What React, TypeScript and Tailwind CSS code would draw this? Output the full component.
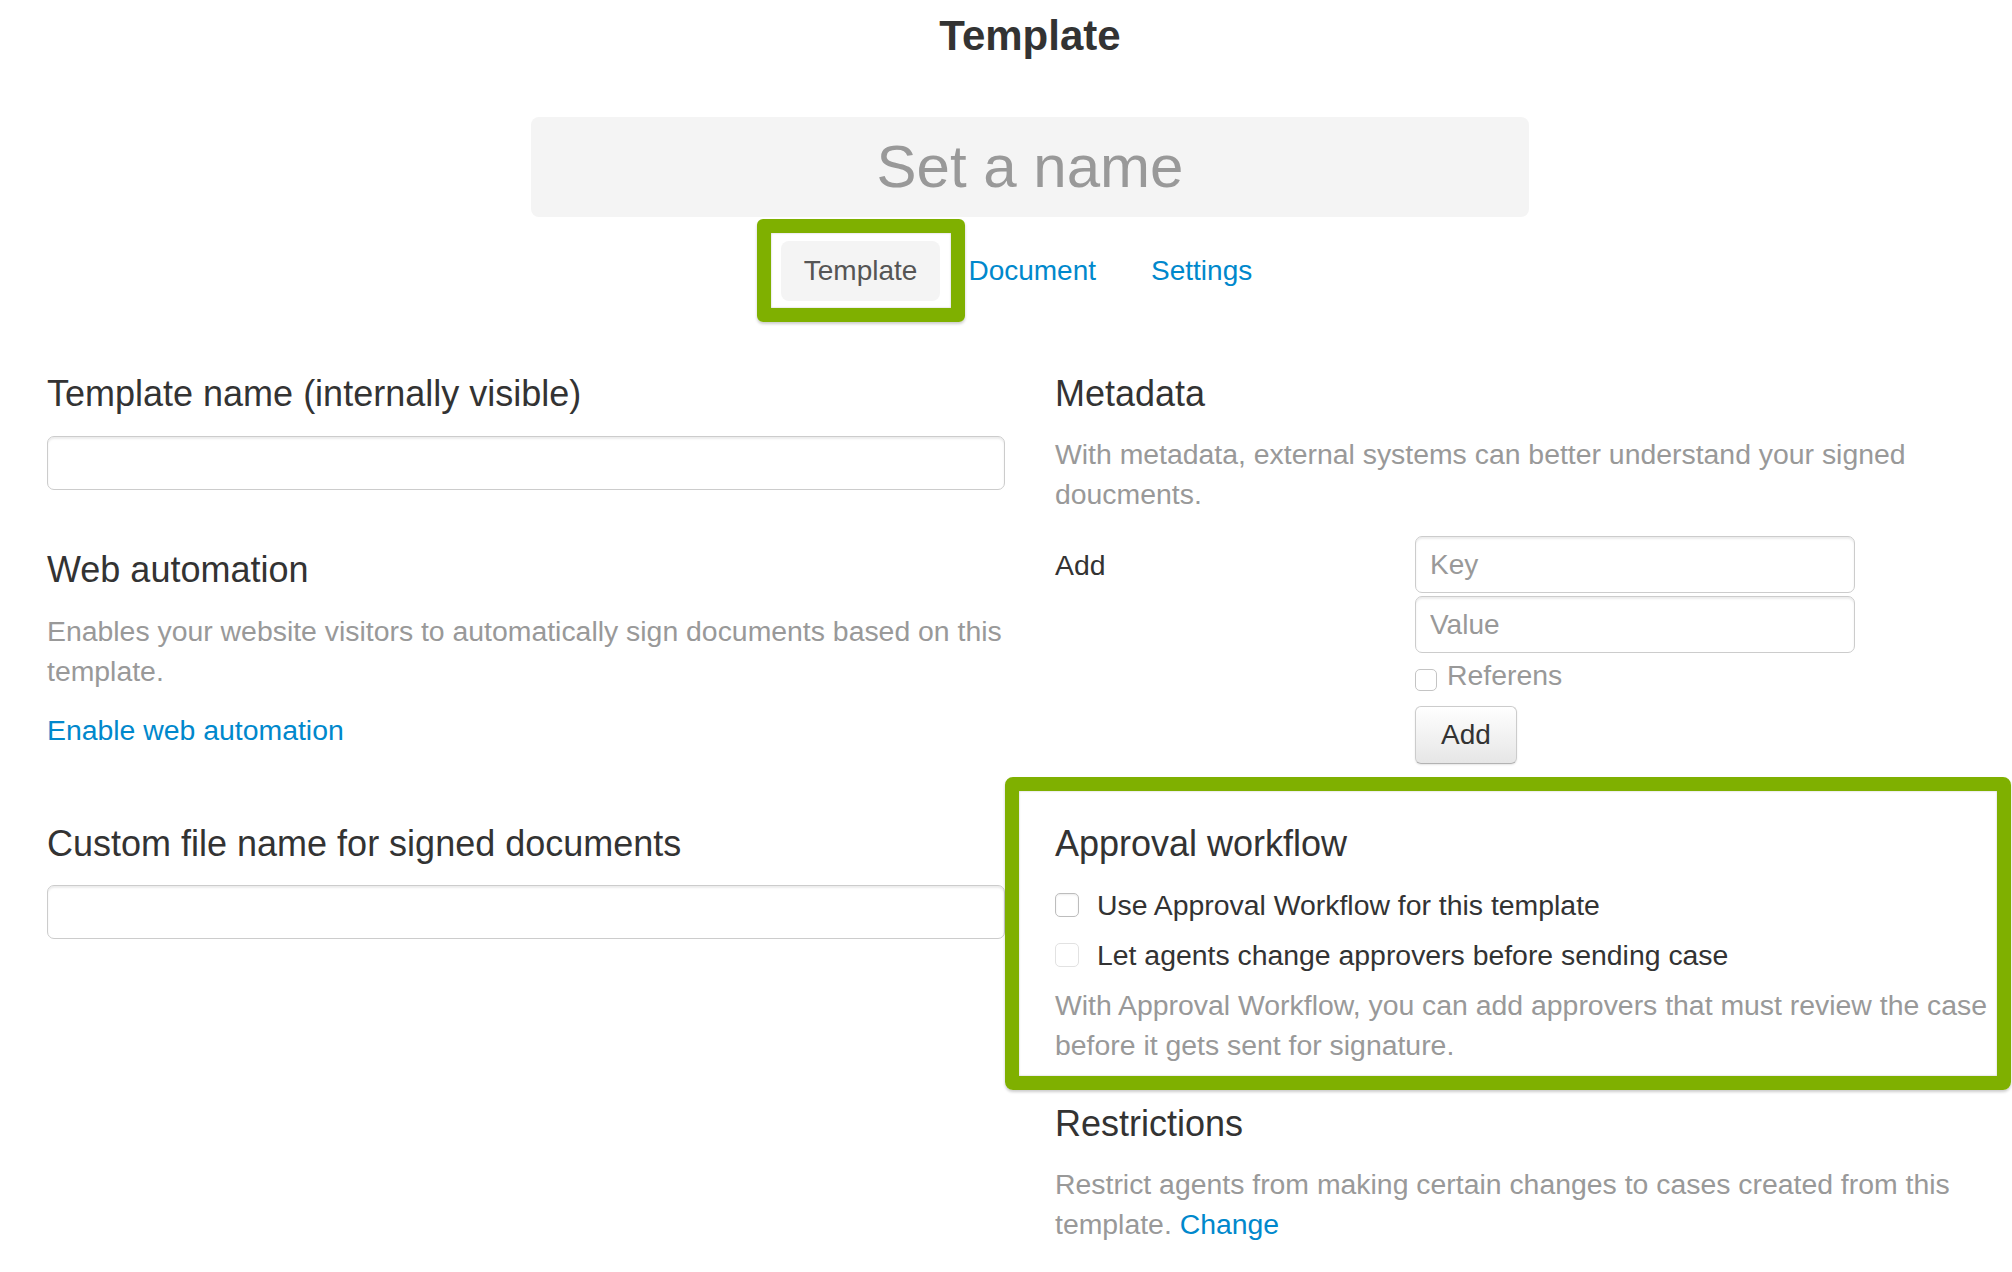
const inputCls =
  "w-full rounded-[7px] border border-[#cccccc] bg-white px-[14px] text-[28px] text-[#333] shadow-[inset_0_2px_2px_rgba(0,0,0,0.08)] outline-none placeholder:text-[#999]";

const Checkbox = ({ faded }: { faded?: boolean }) => (
  <span
    className={
      "block w-[24px] h-[24px] shrink-0 rounded-[5px] border bg-white " +
      (faded ? "border-[#e2e2e2]" : "border-[#bdbdbd] shadow-[inset_0_1px_2px_rgba(0,0,0,0.08)]")
    }
  />
);

const App = () => {
  return (
    <div className="w-[2012px] h-[1272px] overflow-hidden bg-white font-['Liberation_Sans',Arial,sans-serif] text-[28.4px] leading-[40px] text-[#333]">
      <div className="pl-[47px] w-[2013px]">
        {/* header */}
        <header className="w-[1966px] flex flex-col items-center">
          <h1 className="mt-[12px] text-[42px] leading-[48px] font-bold text-[#333]">Template</h1>
          <div className="mt-[57px] w-[998px] h-[100px] rounded-[8px] bg-[#f4f4f4] flex items-center justify-center text-[60px] leading-none text-[#999]">
            Set a name
          </div>
          <nav className="mt-[24px] mr-[4px] flex gap-[5px] h-[60px] text-[28px]">
            <div className="relative">
              <span className="flex h-[60px] items-center rounded-[8px] bg-[#f4f4f4] px-[23px] text-[#555]">Template</span>
              <span className="pointer-events-none absolute -left-[24px] -right-[25px] -top-[22px] -bottom-[21px] rounded-[6px] border-[14px] border-[#7fb000] shadow-[0_2px_3px_rgba(0,0,0,0.2),inset_0_0_2px_rgba(0,0,0,0.25)]" />
            </div>
            <a className="flex h-[60px] items-center px-[23px] text-[#0088cc]">Document</a>
            <a className="ml-[4px] flex h-[60px] items-center px-[23px] text-[#0088cc]">Settings</a>
          </nav>
        </header>

        <div className="mt-[73px] grid grid-cols-[958px_958px] gap-x-[50px]">
          {/* left column */}
          <div className="flex flex-col items-start">
            <h2 className="text-[36px] leading-[40px]">Template name (internally visible)</h2>
            <input className={inputCls + " mt-[22px] h-[54px]"} />
            <h2 className="mt-[60px] text-[36px] leading-[40px]">Web automation</h2>
            <p className="mt-[21px] text-[#999]">
              Enables your website visitors to automatically sign documents based on this template.
            </p>
            <a className="mt-[19px] text-[#0088cc]">Enable web automation</a>
            <h2 className="mt-[74px] text-[36px] leading-[40px]">Custom file name for signed documents</h2>
            <input className={inputCls + " mt-[21px] h-[54px]"} />
          </div>

          {/* right column */}
          <div className="flex flex-col items-start">
            <h2 className="text-[36px] leading-[40px]">Metadata</h2>
            <p className="mt-[20px] text-[#999]">
              With metadata, external systems can better understand your signed doucments.
            </p>
            <div className="mt-[22px] flex">
              <label className="w-[360px] pt-[9px]">Add</label>
              <div className="flex w-[440px] flex-col items-start">
                <input className={inputCls + " h-[57px]"} placeholder="Key" />
                <input className={inputCls + " mt-[3px] h-[57px]"} placeholder="Value" />
                <label className="mt-[2px] flex items-start gap-[10px] text-[#999]">
                  <span className="mt-[14px] block h-[22px] w-[22px] rounded-[5px] border border-[#c4c4c4] bg-white" />
                  Referens
                </label>
                <button className="mt-[11px] h-[58px] rounded-[6px] border border-[#cccccc] border-b-[#b3b3b3] bg-gradient-to-b from-white to-[#e6e6e6] px-[25px] text-[28px] text-[#333] shadow-[0_1px_2px_rgba(0,0,0,0.1)]">
                  Add
                </button>
              </div>
            </div>

            <section className="mt-[13px] -ml-[50px] w-[1006px] rounded-[8px] border-[14px] border-[#7fb000] pl-[36px] pt-[33px] pb-[11px] shadow-[0_2px_3px_rgba(0,0,0,0.2),inset_0_0_2px_rgba(0,0,0,0.25)]">
              <h2 className="text-[36px] leading-[40px]">Approval workflow</h2>
              <label className="mt-[21px] flex items-center gap-[18px]">
                <Checkbox />
                Use Approval Workflow for this template
              </label>
              <label className="mt-[10px] flex items-center gap-[18px]">
                <Checkbox faded />
                Let agents change approvers before sending case
              </label>
              <p className="mt-[10px] text-[#999]">
                With Approval Workflow, you can add approvers that must review the case before it gets sent for signature.
              </p>
            </section>

            <h2 className="mt-[14px] text-[36px] leading-[40px]">Restrictions</h2>
            <p className="mt-[20px] text-[#999]">
              Restrict agents from making certain changes to cases created from this template.{" "}
              <a className="text-[#0088cc]">Change</a>
            </p>
          </div>
        </div>
      </div>
    </div>
  );
};

export default App;
